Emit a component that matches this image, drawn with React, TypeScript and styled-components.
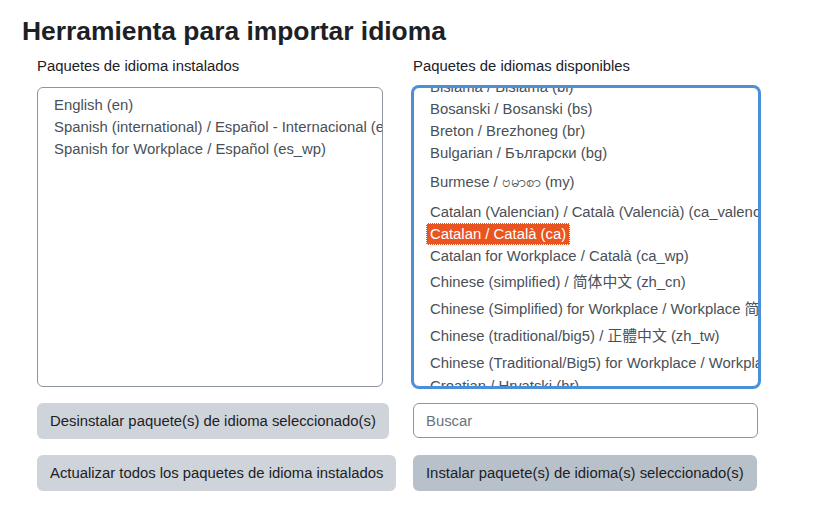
import React, { useLayoutEffect, useRef } from 'react';
import styled, { createGlobalStyle } from 'styled-components';

const GlobalStyle = createGlobalStyle`
  html, body {
    margin: 0;
    padding: 0;
    background: #ffffff;
  }
  body {
    font-family: "Liberation Sans", Arial, "Noto Sans CJK SC", sans-serif;
    color: #1d2125;
  }
`;

const Page = styled.div`
  padding: 16px 22px 0;
`;

const Title = styled.h2`
  margin: 0 0 8px;
  font-size: 26.4px;
  line-height: 31px;
  font-weight: 700;
  color: #1d2125;
`;

const Form = styled.div`
  display: grid;
  grid-template-columns: 360px 348px;
  column-gap: 16px;
  padding-left: 15px;
`;

const Column = styled.div`
  display: flex;
  flex-direction: column;
  align-items: flex-start;
`;

const Label = styled.label`
  font-size: 14.85px;
  line-height: 22px;
  margin-bottom: 10px;
  color: #1d2125;
`;

const ListBox = styled.div<{ $focused?: boolean }>`
  box-sizing: border-box;
  width: 346px;
  height: 300px;
  padding: 6px 12px;
  border: 1px solid ${p => (p.$focused ? '#4a8fd7' : '#8f959e')};
  border-radius: 6px;
  box-shadow: ${p => (p.$focused ? '0 0 0 2px #4a8fd7' : 'none')};
  overflow: hidden;
  background: #fff;
  margin-bottom: 16px;
`;

// row height and top offset of the text, per kind of script in the label
const rowMetrics = {
  normal: { h: 22, top: 0 },
  cjk: { h: 27, top: 2 },
  myanmar: { h: 37, top: 0 },
};

const Option = styled.div<{ $size: 'normal' | 'cjk' | 'myanmar'; $selected?: boolean }>`
  box-sizing: border-box;
  width: fit-content;
  padding: ${p => rowMetrics[p.$size].top}px 4px 0;
  height: ${p => rowMetrics[p.$size].h}px;
  line-height: ${p => rowMetrics[p.$size].h}px;
  font-size: 14.85px;
  white-space: nowrap;
  color: ${p => (p.$selected ? '#ffffff' : '#495057')};
  background: ${p => (p.$selected ? '#e95420' : 'transparent')};
  outline: ${p => (p.$selected ? '1px dotted #ffffff' : 'none')};
  outline-offset: -1px;
`;

const Button = styled.button<{ $disabled?: boolean }>`
  box-sizing: border-box;
  font-family: inherit;
  font-size: 14.85px;
  line-height: 22px;
  padding: 6px 12px;
  border: 1px solid transparent;
  border-radius: 6px;
  background: ${p => (p.$disabled ? '#b8c0c9' : '#ced4da')};
  color: #1d2125;
  cursor: pointer;
  margin-bottom: 16px;
  white-space: nowrap;
`;

const SearchInput = styled.input`
  box-sizing: border-box;
  width: 345px;
  height: 35px;
  font-family: inherit;
  font-size: 14.85px;
  padding: 6px 12px;
  border: 1px solid #8f959e;
  border-radius: 6px;
  color: #495057;
  margin-bottom: 17px;
  outline: none;
  &::placeholder {
    color: #6a737b;
  }
`;

type Lang = { label: string; size?: 'normal' | 'cjk' | 'myanmar'; selected?: boolean };

const installed: Lang[] = [
  { label: 'English (en)' },
  { label: 'Spanish (international) / Español - Internacional (es)' },
  { label: 'Spanish for Workplace / Español (es_wp)' },
];

const available: Lang[] = [
  { label: 'Basque / Euskara (eu)' },
  { label: 'Belarusian / Беларуская (be)' },
  { label: 'Bislama / Bislama (bi)' },
  { label: 'Bosanski / Bosanski (bs)' },
  { label: 'Breton / Brezhoneg (br)' },
  { label: 'Bulgarian / Български (bg)' },
  { label: 'Burmese / ဗမာစာ (my)', size: 'myanmar' },
  { label: 'Catalan (Valencian) / Català (Valencià) (ca_valencia)' },
  { label: 'Catalan / Català (ca)', selected: true },
  { label: 'Catalan for Workplace / Català (ca_wp)' },
  { label: 'Chinese (simplified) / 简体中文 (zh_cn)', size: 'cjk' },
  { label: 'Chinese (Simplified) for Workplace / Workplace 简体中文 (zh_cn_wp)', size: 'cjk' },
  { label: 'Chinese (traditional/big5) / 正體中文 (zh_tw)', size: 'cjk' },
  { label: 'Chinese (Traditional/Big5) for Workplace / Workplace 正體中文 (zh_tw_wp)', size: 'cjk' },
  { label: 'Croatian / Hrvatski (hr)' },
  { label: 'Czech / Čeština (cs)' },
  { label: 'Danish / Dansk (da)' },
];

export default function App() {
  const availableRef = useRef<HTMLDivElement>(null);

  useLayoutEffect(() => {
    if (availableRef.current) availableRef.current.scrollTop = 62;
  }, []);

  return (
    <Page>
      <GlobalStyle />
      <Title>Herramienta para importar idioma</Title>
      <Form>
        <Column>
          <Label>Paquetes de idioma instalados</Label>
          <ListBox>
            {installed.map(l => (
              <Option key={l.label} $size="normal">{l.label}</Option>
            ))}
          </ListBox>
          <Button>Desinstalar paquete(s) de idioma seleccionado(s)</Button>
          <Button>Actualizar todos los paquetes de idioma instalados</Button>
        </Column>
        <Column>
          <Label>Paquetes de idiomas disponibles</Label>
          <ListBox $focused ref={availableRef}>
            {available.map(l => (
              <Option key={l.label} $size={l.size ?? 'normal'} $selected={l.selected}>
                {l.label}
              </Option>
            ))}
          </ListBox>
          <SearchInput placeholder="Buscar" />
          <Button $disabled>Instalar paquete(s) de idioma(s) seleccionado(s)</Button>
        </Column>
      </Form>
    </Page>
  );
}
